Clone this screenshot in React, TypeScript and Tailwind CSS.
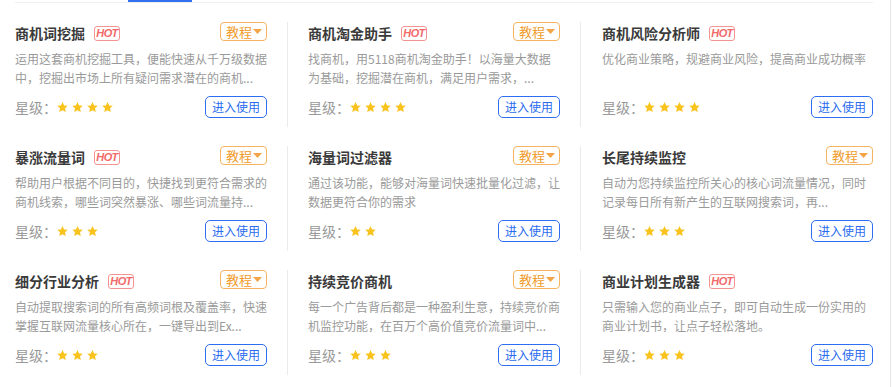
import React from "react";

type Tool = {
  title: string;
  hot: boolean;
  tutorial: boolean;
  desc: string;
  stars: number;
};

const tools: Tool[] = [
  {
    title: "商机词挖掘",
    hot: true,
    tutorial: true,
    desc: "运用这套商机挖掘工具，便能快速从千万级数据\n中，挖掘出市场上所有疑问需求潜在的商机...",
    stars: 4,
  },
  {
    title: "商机淘金助手",
    hot: true,
    tutorial: true,
    desc: "找商机，用5118商机淘金助手！以海量大数据\n为基础，挖掘潜在商机，满足用户需求，...",
    stars: 4,
  },
  {
    title: "商机风险分析师",
    hot: true,
    tutorial: false,
    desc: "优化商业策略，规避商业风险，提高商业成功概率",
    stars: 4,
  },
  {
    title: "暴涨流量词",
    hot: true,
    tutorial: true,
    desc: "帮助用户根据不同目的，快捷找到更符合需求的\n商机线索，哪些词突然暴涨、哪些词流量持...",
    stars: 3,
  },
  {
    title: "海量词过滤器",
    hot: false,
    tutorial: true,
    desc: "通过该功能，能够对海量词快速批量化过滤，让\n数据更符合你的需求",
    stars: 2,
  },
  {
    title: "长尾持续监控",
    hot: false,
    tutorial: true,
    desc: "自动为您持续监控所关心的核心词流量情况，同时\n记录每日所有新产生的互联网搜索词，再...",
    stars: 3,
  },
  {
    title: "细分行业分析",
    hot: true,
    tutorial: true,
    desc: "自动提取搜索词的所有高频词根及覆盖率，快速\n掌握互联网流量核心所在，一键导出到Ex...",
    stars: 3,
  },
  {
    title: "持续竞价商机",
    hot: false,
    tutorial: true,
    desc: "每一个广告背后都是一种盈利生意，持续竞价商\n机监控功能，在百万个高价值竞价流量词中...",
    stars: 3,
  },
  {
    title: "商业计划生成器",
    hot: true,
    tutorial: false,
    desc: "只需输入您的商业点子，即可自动生成一份实用的\n商业计划书，让点子轻松落地。",
    stars: 3,
  },
];

function Star() {
  return (
    <svg width="11" height="10" viewBox="1.5 1.5 21 20" className="shrink-0">
      <path
        d="M12 1.5l3.2 6.9 7.3.8-5.5 5 1.6 7.3L12 17.8l-6.6 3.7L7 14.2l-5.5-5 7.3-.8z"
        fill="#f9c31d"
      />
    </svg>
  );
}

function ToolCard({ tool, col }: { tool: Tool; col: number }) {
  // column paddings/dividers, written out in full
  const colClass =
    col === 0
      ? "pr-[20px] border-r border-[#ebebeb]"
      : col === 1
      ? "px-[20px] border-r border-[#ebebeb]"
      : "pl-[21px]";

  return (
    <div className={"flex h-[105px] flex-col " + colClass}>
      {/* Header */}
      <div className="flex h-[22px] items-start justify-between">
        <div className="flex h-[22px] items-center">
          <span className="text-[14px] font-bold leading-[22px] text-[#3a3a3a]">{tool.title}</span>
          {tool.hot && (
            <span className="ml-[9px] flex h-[15px] w-[26px] items-center justify-center rounded-[3px] border border-[#f59393] font-['Liberation_Sans',sans-serif] text-[11px] font-bold italic leading-none tracking-[-0.6px] text-[#f26b6b]">
              HOT
            </span>
          )}
        </div>
        {tool.tutorial && (
          <button className="flex h-[19px] w-[47px] items-center justify-center gap-[1px] rounded-[4px] border border-[#f6b460] pl-[1px] text-[13px] leading-none text-[#f09b2c]">
            教程
            <svg width="9" height="5" viewBox="0 0 9 5">
              <path d="M0 0h9L4.5 5z" fill="#f4a447" />
            </svg>
          </button>
        )}
      </div>

      {/* Description */}
      <p className="mt-[5px] whitespace-pre text-[12px] leading-[19px] text-[#9a9a9a]">{tool.desc}</p>

      {/* Footer */}
      <div className="mb-[9px] mt-auto flex h-[22px] items-center justify-between">
        <div className="flex items-center">
          <span className="text-[14px] leading-none text-[#999]">星级：</span>
          <div className="flex items-center gap-[4px]">
            {Array.from({ length: tool.stars }).map((_, i) => (
              <Star key={i} />
            ))}
          </div>
        </div>
        <button className="flex h-[22px] w-[62px] items-center justify-center rounded-[5px] border border-[#2d6ef3] text-[12px] leading-none text-[#2a6cef]">
          进入使用
        </button>
      </div>
    </div>
  );
}

export default function App() {
  return (
    <div className="flex h-[387px] w-[892px] overflow-hidden bg-white font-['Noto_Sans_CJK_SC',sans-serif]">
      <div className="w-[890px] pl-[15px] pr-[17px]">
        {/* Tab bar underline */}
        <div className="flex h-[3px] border-b border-[#efefef]">
          <div className="w-[113px]" />
          <div className="h-[2px] w-[64px] bg-[#3370f0]" />
        </div>

        {/* Tool grid */}
        <div className="mt-[19px] grid grid-cols-[273px_293px_1fr] gap-y-[19px]">
          {tools.map((tool, i) => (
            <ToolCard key={tool.title} tool={tool} col={i % 3} />
          ))}
        </div>
      </div>
      <div className="w-px self-stretch bg-[#e6e6e6]" />
    </div>
  );
}
